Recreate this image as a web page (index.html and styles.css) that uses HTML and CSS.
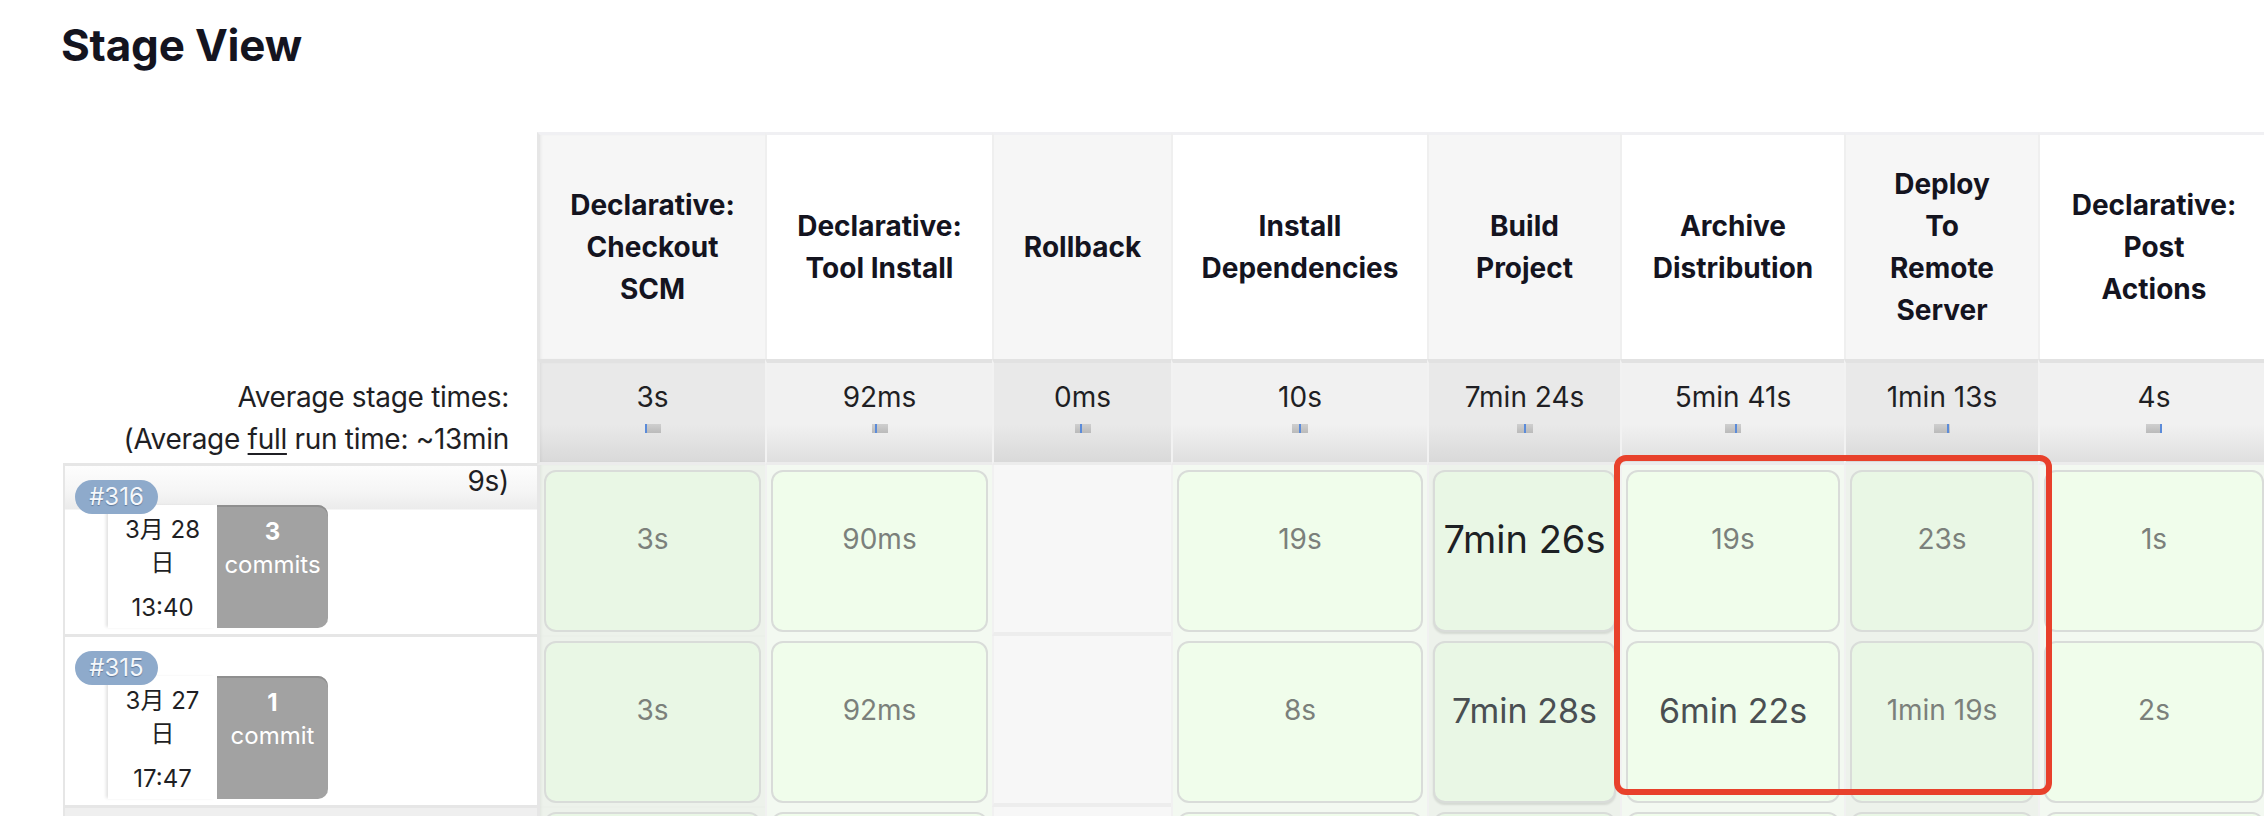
FILE: index.html
```html
<!DOCTYPE html>
<html lang="zh">
<head>
<meta charset="utf-8">
<title>Stage View</title>
<link rel="stylesheet" href="styles.css">
</head>
<body>
<h2 class="title">Stage View</h2>
<div class="stage-table">
  <!-- header row -->
  <div class="corner"></div>
  <div class="hd odd first">Declarative:<br>Checkout<br>SCM</div>
  <div class="hd even">Declarative:<br>Tool Install</div>
  <div class="hd odd">Rollback</div>
  <div class="hd even">Install<br>Dependencies</div>
  <div class="hd odd">Build<br>Project</div>
  <div class="hd even">Archive<br>Distribution</div>
  <div class="hd odd">Deploy<br>To<br>Remote<br>Server</div>
  <div class="hd even">Declarative:<br>Post<br>Actions</div>

  <!-- averages row -->
  <div class="avg-label">Average stage times:<br>(Average <u>full</u> run time: ~13min<br>9s)</div>
  <div class="avg odd first"><div class="avg-val">3s</div><div class="bar"><i style="margin-left:0px"></i></div></div>
  <div class="avg even"><div class="avg-val">92ms</div><div class="bar"><i style="margin-left:3px"></i></div></div>
  <div class="avg odd"><div class="avg-val">0ms</div><div class="bar"><i style="margin-left:5px"></i></div></div>
  <div class="avg even"><div class="avg-val">10s</div><div class="bar"><i style="margin-left:7px"></i></div></div>
  <div class="avg odd"><div class="avg-val">7min 24s</div><div class="bar"><i style="margin-left:7px"></i></div></div>
  <div class="avg even"><div class="avg-val">5min 41s</div><div class="bar"><i style="margin-left:10px"></i></div></div>
  <div class="avg odd"><div class="avg-val">1min 13s</div><div class="bar"><i style="margin-left:13px"></i></div></div>
  <div class="avg even"><div class="avg-val">4s</div><div class="bar"><i style="margin-left:14px"></i></div></div>

  <!-- run #316 -->
  <div class="run run-first">
    <div class="badge">#316</div>
    <div class="run-info">
      <div class="run-date">3月 28<br>日<div class="run-time">13:40</div></div>
      <div class="commits"><b>3</b><br>commits</div>
    </div>
  </div>
  <div class="cell odd first"><div class="box"><div class="dur">3s</div></div></div>
  <div class="cell even"><div class="box"><div class="dur">90ms</div></div></div>
  <div class="cell odd empty"></div>
  <div class="cell even"><div class="box"><div class="dur">19s</div></div></div>
  <div class="cell odd"><div class="box raised"><div class="dur dur-xl">7min 26s</div></div></div>
  <div class="cell even"><div class="box"><div class="dur">19s</div></div></div>
  <div class="cell odd"><div class="box"><div class="dur">23s</div></div></div>
  <div class="cell even"><div class="box"><div class="dur">1s</div></div></div>

  <!-- run #315 -->
  <div class="run">
    <div class="badge">#315</div>
    <div class="run-info">
      <div class="run-date">3月 27<br>日<div class="run-time">17:47</div></div>
      <div class="commits"><b>1</b><br>commit</div>
    </div>
  </div>
  <div class="cell odd first"><div class="box"><div class="dur">3s</div></div></div>
  <div class="cell even"><div class="box"><div class="dur">92ms</div></div></div>
  <div class="cell odd empty"></div>
  <div class="cell even"><div class="box"><div class="dur">8s</div></div></div>
  <div class="cell odd"><div class="box raised"><div class="dur dur-lg">7min 28s</div></div></div>
  <div class="cell even"><div class="box"><div class="dur dur-lg">6min 22s</div></div></div>
  <div class="cell odd"><div class="box"><div class="dur">1min 19s</div></div></div>
  <div class="cell even"><div class="box"><div class="dur">2s</div></div></div>

  <!-- next run (cut off) -->
  <div class="run run-more"></div>
  <div class="cell odd first"><div class="box"></div></div>
  <div class="cell even"><div class="box"></div></div>
  <div class="cell odd empty"></div>
  <div class="cell even"><div class="box"></div></div>
  <div class="cell odd"><div class="box"></div></div>
  <div class="cell even"><div class="box"></div></div>
  <div class="cell odd"><div class="box"></div></div>
  <div class="cell even"><div class="box"></div></div>

  <div class="highlight"></div>
</div>
</body>
</html>
```

FILE: styles.css
```css
html, body {
  margin: 0;
  padding: 0;
  background: #fff;
  overflow: hidden;
}

body {
  font-family: Inter, "Noto Sans CJK SC", sans-serif;
  color: #14141f;
  width: 2264px;
  height: 816px;
}

.title {
  margin: 18px 0 0 61px;
  font-size: 44px;
  line-height: 54px;
  font-weight: 700;
  letter-spacing: -0.2px;
}

.stage-table {
  position: relative;
  margin: 60px 0 0 63px;
  display: grid;
  grid-template-columns: 474px 228px 227px 179px 256px 193px 224px 194px 230px;
  grid-template-rows: 227px 106px 171px 171px 171px;
}

/* header row */
.corner {
  background: #fff;
}

.hd {
  border-top: 3px solid #f0f0f3;
  border-left: 2px solid #efefef;
  display: flex;
  align-items: center;
  justify-content: center;
  text-align: center;
  white-space: nowrap;
  font-size: 28px;
  line-height: 42px;
  font-weight: 700;
  color: #14141f;
}

.hd.odd { background: #f6f6f6; }
.hd.even { background: #fff; }

.first {
  border-left: 3px solid #e6e6e6;
  box-shadow: inset 2px 0 3px -1px rgba(0, 0, 0, 0.06);
}

/* averages row */
.avg-label {
  position: relative;
  z-index: 1;
  padding: 17px 28px 0 0;
  text-align: right;
  font-size: 28px;
  line-height: 42px;
  letter-spacing: -0.3px;
  color: #1f1f24;
}

.avg-label u {
  text-decoration-thickness: 2px;
  text-underline-offset: 4px;
}

.avg {
  border-top: 4px solid #e2e2e2;
  border-bottom: 3px solid #ececec;
  border-left: 2px solid #f2f2f2;
  padding-top: 13px;
  text-align: center;
  font-size: 28px;
  line-height: 42px;
  color: #1f1f24;
}

.avg.first { border-left: 3px solid #e6e6e6; }

.avg.odd { background: linear-gradient(to bottom, #e9e9e9 0%, #e9e9e9 62%, #d9d9d9 100%); }
.avg.even { background: linear-gradient(to bottom, #f1f1f1 0%, #f1f1f1 62%, #dfdfdf 100%); }

.bar {
  width: 16px;
  height: 9px;
  margin: 6px auto 0;
  background: linear-gradient(#cfcfcf, #bababa);
  display: flex;
}

.bar i {
  display: block;
  width: 2px;
  height: 9px;
  background: #5b8bd9;
}

/* run rows (left column) */
.run {
  margin-top: -2px;
  border-top: 3px solid #e6e6e6;
  border-left: 2px solid #e6e6e6;
  background: #fff;
  display: flex;
  flex-direction: column;
  align-items: flex-start;
}

.run-first {
  background: linear-gradient(to bottom, #fdfdfd 0px, #f5f5f5 26px, #ebebeb 43px, #fff 44px, #fff 100%);
}

.run-more {
  background: #efefef;
}

.badge {
  position: relative;
  z-index: 1;
  margin: 14px 0 -9px 10px;
  width: 83px;
  height: 34px;
  border-radius: 17px;
  background: #8eaacb;
  color: #f4f7fb;
  text-shadow: 0 1px 1px rgba(40, 60, 90, 0.45);
  font-size: 24px;
  line-height: 34px;
  text-align: center;
}

.run-info {
  display: flex;
  margin-left: 43px;
  height: 123px;
}

.run-date {
  width: 109px;
  background: #fff;
  box-shadow: -3px 0 3px -1px rgba(0, 0, 0, 0.12);
  padding-top: 8px;
  text-align: center;
  font-size: 24px;
  line-height: 33px;
  color: #1f1f24;
}

.run-time {
  margin-top: 12px;
}

.commits {
  width: 111px;
  background: #a2a2a2;
  box-shadow: inset 0 2px 0 #8f8f8f;
  border-radius: 0 10px 10px 0;
  padding-top: 10px;
  text-align: center;
  font-size: 24px;
  line-height: 33px;
  color: #fff;
}

.commits b {
  font-weight: 700;
}

/* data cells */
.cell {
  border-left: 2px solid #f1f1f1;
  padding: 5px 4px 4px 4px;
}

.cell.first {
  border-left: 3px solid #e6e6e6;
  padding-left: 4px;
}

.cell.odd { background: #edf2eb; }
.cell.even { background: #f3f9f1; }

.cell.empty {
  background: #f7f7f7;
  border-bottom: 4px solid #ededed;
  padding: 0;
}

.box {
  height: 162px;
  box-sizing: border-box;
  border: 2px solid #d9dcd9;
  border-radius: 12px;
  padding-top: 25px;
}

.cell.odd .box { background: #e9f7e5; }
.cell.even .box { background: #f0fdeb; }

.box.raised {
  box-shadow: 0 2px 2px rgba(0, 0, 0, 0.1);
}

.dur {
  height: 84px;
  display: flex;
  align-items: center;
  justify-content: center;
  font-size: 28px;
  color: #7b807b;
  white-space: nowrap;
}

.dur-xl {
  font-size: 38px;
  color: #1d2124;
}

.dur-lg {
  font-size: 34px;
  color: #4a4f52;
}

/* annotation overlay (red highlight drawn over the grid) */
.highlight {
  position: absolute;
  grid-column: 7 / 9;
  grid-row: 3 / 5;
  top: -10px;
  bottom: 12px;
  left: -6px;
  right: -14px;
  z-index: 2;
  border: 6px solid #e8412b;
  border-radius: 12px;
}
```
